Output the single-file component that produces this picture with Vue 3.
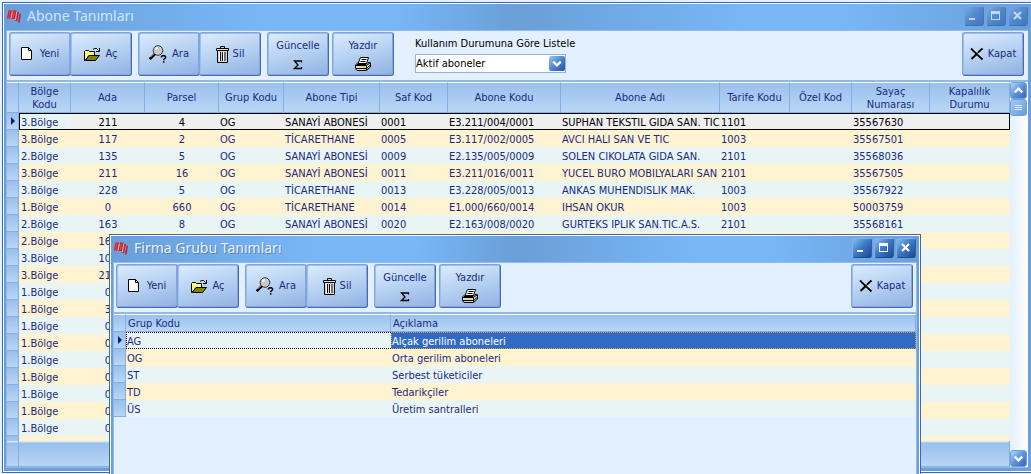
<script setup>
import { ref } from 'vue'

const filter = ref('Aktif aboneler')

const tools = [
  [
    { icon: 'page', label: 'Yeni', w: 12, h: 14 },
    { icon: 'folder', label: 'Aç', w: 17, h: 15 }
  ],
  [
    { icon: 'find', label: 'Ara', w: 18, h: 18 },
    { icon: 'trash', label: 'Sil', w: 13, h: 17 }
  ],
  [{ icon: 'sigma', label: 'Güncelle', w: 10, h: 10, stacked: true }],
  [{ icon: 'printer', label: 'Yazdır', w: 16, h: 14, stacked: true }]
]

const windows = [
  { id: 'main', title: 'Abone Tanımları' },
  { id: 'dialog', title: 'Firma Grubu Tanımları' }
]

const columns = [
  { label: 'Bölge Kodu', width: 52 },
  { label: 'Ada', width: 74, center: true },
  { label: 'Parsel', width: 74, center: true },
  { label: 'Grup Kodu', width: 65 },
  { label: 'Abone Tipi', width: 96 },
  { label: 'Saf Kod', width: 68 },
  { label: 'Abone Kodu', width: 113 },
  { label: 'Abone Adı', width: 159 },
  { label: 'Tarife Kodu', width: 70 },
  { label: 'Özel Kod', width: 62 },
  { label: 'Sayaç Numarası', width: 78 },
  { label: 'Kapalılık Durumu', width: 80 }
]

const S = 'SANAYİ ABONESİ'
const T = 'TİCARETHANE'
const rows = [
  ['3.Bölge', '211', '4', 'OG', S, '0001', 'E3.211/004/0001', 'SUPHAN TEKSTIL GIDA SAN. TIC', '1101', '', '35567630', ''],
  ['3.Bölge', '117', '2', 'OG', T, '0005', 'E3.117/002/0005', 'AVCI HALI SAN VE TIC', '1003', '', '35567501', ''],
  ['2.Bölge', '135', '5', 'OG', S, '0009', 'E2.135/005/0009', 'SOLEN CIKOLATA GIDA SAN.', '2101', '', '35568036', ''],
  ['3.Bölge', '211', '16', 'OG', S, '0011', 'E3.211/016/0011', 'YUCEL BURO MOBILYALARI SAN', '2101', '', '35567505', ''],
  ['3.Bölge', '228', '5', 'OG', T, '0013', 'E3.228/005/0013', 'ANKAS MUHENDISLIK MAK.', '1003', '', '35567922', ''],
  ['1.Bölge', '0', '660', 'OG', T, '0014', 'E1.000/660/0014', 'IHSAN OKUR', '1003', '', '50003759', ''],
  ['2.Bölge', '163', '8', 'OG', S, '0020', 'E2.163/008/0020', 'GURTEKS IPLIK SAN.TIC.A.S.', '2101', '', '35568161', ''],
  ...[
    ['2.Bölge', '163'], ['3.Bölge', '101'], ['3.Bölge', '211'], ['1.Bölge', '0'], ['1.Bölge', '3'],
    ['1.Bölge', '0'], ['1.Bölge', '0'], ['1.Bölge', '0'], ['1.Bölge', '0'], ['1.Bölge', '0'],
    ['1.Bölge', '0'], ['1.Bölge', '0'], ['1.Bölge', '0']
  ].map((r) => [...r, ...Array(10).fill('')])
]

const groups = [
  ['AG', 'Alçak gerilim aboneleri'],
  ['OG', 'Orta gerilim aboneleri'],
  ['ST', 'Serbest tüketiciler'],
  ['TD', 'Tedarikçiler'],
  ['ÜS', 'Üretim santralleri']
]
</script>

<template>
  <div class="desktop">
    <svg class="defs" width="0" height="0" aria-hidden="true">
      <symbol id="logo" viewBox="0 0 14 14">
        <path d="M1.500 1.500H5L3.500 9.500H0zM6 1.500H9.500L8 10H4.500z" fill="#d8141c" />
        <path d="M10.200 3H12L10 12H8.200zM12.500 5 14 4.500 12.500 13.500H11z" fill="#c8141c" />
        <path d="M3 2 1.800 9.500M7.500 2 6.200 9.500" stroke="#f4787c" stroke-width=".6" fill="none" />
        <path d="M5.200 3 4.200 9M9.800 3 8.500 11" stroke="#e8d4e0" stroke-width=".7" fill="none" />
      </symbol>
      <symbol id="page" viewBox="0 0 12 14">
        <path d="M.5.5H7.500L10.500 3.500V12.500H.5z" fill="#fff" stroke="#000" />
        <path d="M7.500.5V3.500H10.500" fill="none" stroke="#000" />
      </symbol>
      <symbol id="folder" viewBox="0 0 17 15">
        <path d="M.5 13.500V4.500L1.500 3.500H4.500L5.500 4.500H10.500V8.500H5L1 13.500z" fill="#ffff7c" stroke="#000" />
        <path d="M1.500 13.500 5 8.500H15.500L11.500 13.500z" fill="#848400" stroke="#000" />
        <path d="M9 2.500 10.500 1.500H12.500L14.500 3.500M15.500 1V4.500H12" fill="none" stroke="#000" />
      </symbol>
      <symbol id="find" viewBox="0 0 18 18">
        <circle cx="9" cy="5.500" r="4.800" fill="#c8c8c8" stroke="#333" />
        <path d="M6.500 5Q7 3 9 2.500" stroke="#fff" stroke-width="1.500" fill="none" />
        <path d="M5.800 9 .8 14" stroke="#000" stroke-width="2.600" />
        <path d="M5 8.500 1.500 12" stroke="#eee" stroke-width=".8" />
        <path d="M12.500 12.500V11.500L13.500 10.800H15.500L16.500 11.800V13L14.700 14.500V15.300M14 17H15.500" stroke="#000" stroke-width="1.500" fill="none" />
      </symbol>
      <symbol id="trash" viewBox="0 0 13 17">
        <path d="M4.500 2V.5H8.500V2" fill="none" stroke="#000" />
        <path d="M.5 2.500H12.500V4.500H.5z" fill="#ddd" stroke="#000" />
        <path d="M1.500 4.500H11.500V16.500H1.500z" fill="#d4d4d4" stroke="#000" />
        <path d="M4.500 6V15M6.500 6V15M9 6V15" stroke="#111" />
        <path d="M3.500 6V15M7.500 6V15" stroke="#fff" />
      </symbol>
      <symbol id="sigma" viewBox="0 0 10 10">
        <path d="M8.500 2.500V1H1.500L5 5 1.500 8.500H8.500V7" fill="none" stroke="#000" stroke-width="1.300" />
      </symbol>
      <symbol id="printer" viewBox="0 0 16 14">
        <path d="M5.500.5H13.500L11.500 6.500H3z" fill="#fff" stroke="#000" />
        <path d="M6.500 2.500H11.500M5.500 4.500H10.500" stroke="#000" />
        <path d="M3 5.500 .5 8V11.500L2 13.500H11.500L15.500 10V6L13 5.500 11 7.500H2" fill="#d8d8d8" stroke="#000" />
        <path d="M.5 8.500H11.500L15.500 5.500M11.500 8.500V13M1 11.500H11.500L15 8.500" fill="none" stroke="#000" />
        <path d="M6 10H10" stroke="#f4e400" stroke-width="1.500" />
      </symbol>
      <symbol id="cross" viewBox="0 0 14 14">
        <path d="M1 1.500 12.500 12.500" stroke="#000" stroke-width="1.800" />
        <path d="M12.500 1.500 1.500 12" stroke="#000" stroke-width="2" />
        <path d="M3 1.500 12 10M12.500 3 8 7.500" stroke="#fff" stroke-width=".6" />
      </symbol>
      <symbol id="down" viewBox="0 0 16 16">
        <path d="M4 6 8 10 12 6" fill="none" stroke="#fff" stroke-width="2.400" />
      </symbol>
      <symbol id="up" viewBox="0 0 16 16">
        <path d="M4 10 8 6 12 10" fill="none" stroke="#fff" stroke-width="2.400" />
      </symbol>
    </svg>

    <section v-for="win in windows" :key="win.id" class="window" :class="win.id" :aria-label="win.title">
      <header class="titlebar">
        <svg class="logo" aria-hidden="true"><use href="#logo" /></svg>
        <h1>{{ win.title }}</h1>
        <div class="captions">
          <button type="button" aria-label="Küçült">
            <svg viewBox="0 0 20 20"><path d="M5 12H11V14H5z" /></svg>
          </button>
          <button type="button" aria-label="Büyüt">
            <svg viewBox="0 0 20 20"><path fill-rule="evenodd" d="M5 5H14V14H5zM6 8V13H13V8z" /></svg>
          </button>
          <button type="button" aria-label="Pencereyi kapat">
            <svg viewBox="0 0 20 20"><path d="M6 6 13 13M13 6 6 13" class="x" /></svg>
          </button>
        </div>
      </header>

      <div class="client">
        <div class="toolbar">
          <div v-for="(group, gi) in tools" :key="gi" class="group">
            <button v-for="t in group" :key="t.label" type="button" class="tool" :class="[{ stacked: t.stacked }, t.icon]">
              <svg :width="t.w" :height="t.h" aria-hidden="true"><use :href="'#' + t.icon" /></svg>
              <span>{{ t.label }}</span>
            </button>
          </div>
          <div v-if="win.id === 'main'" class="filter">
            <label for="usage">Kullanım Durumuna Göre Listele</label>
            <div class="combo">
              <select id="usage" v-model="filter">
                <option>Aktif aboneler</option>
              </select>
              <svg aria-hidden="true"><use href="#down" /></svg>
            </div>
          </div>
          <button type="button" class="tool close">
            <svg width="14" height="14" aria-hidden="true"><use href="#cross" /></svg>
            <span>Kapat</span>
          </button>
        </div>

        <div v-if="win.id === 'main'" class="content">
          <div class="sheet">
            <div class="rows">
              <table class="grid">
                <colgroup>
                  <col class="mark-col" />
                  <col v-for="c in columns" :key="c.label" :style="{ width: c.width + 'px' }" />
                </colgroup>
                <thead>
                  <tr>
                    <th class="mark"></th>
                    <th v-for="c in columns" :key="c.label" scope="col">{{ c.label }}</th>
                  </tr>
                </thead>
                <tbody>
                  <tr v-for="(row, ri) in rows" :key="ri" :class="{ current: ri === 0 }">
                    <td class="mark"></td>
                    <td v-for="(cell, ci) in row" :key="ci" :class="{ center: columns[ci].center }">{{ cell }}</td>
                  </tr>
                </tbody>
              </table>
            </div>
            <div class="summary"><span></span></div>
          </div>
          <div class="scrollbar">
            <button type="button" aria-label="Yukarı"><svg><use href="#up" /></svg></button>
            <div class="thumb"><i></i><i></i><i></i></div>
            <button type="button" class="last" aria-label="Aşağı"><svg><use href="#down" /></svg></button>
          </div>
        </div>

        <div v-else class="content">
          <div class="rows">
            <table class="grid small">
              <colgroup>
                <col class="mark-col" />
                <col class="code-col" />
                <col />
              </colgroup>
              <thead>
                <tr>
                  <th class="mark"></th>
                  <th scope="col">Grup Kodu</th>
                  <th scope="col">Açıklama</th>
                </tr>
              </thead>
              <tbody>
                <tr v-for="(g, i) in groups" :key="g[0]" :class="{ picked: i === 0 }">
                  <td class="mark"></td>
                  <td><span>{{ g[0] }}</span></td>
                  <td><span>{{ g[1] }}</span></td>
                </tr>
              </tbody>
            </table>
          </div>
        </div>
      </div>
    </section>
  </div>
</template>

<style>
body {
  margin: 0;
  background: #e4f0fc;
}
</style>

<style scoped>
.desktop {
  position: relative;
  display: flex;
  height: 100vh;
  box-sizing: border-box;
  padding: 2px 0 1px 2px;
  overflow: hidden;
  font-family: "DejaVu Sans Condensed", "DejaVu Sans", sans-serif;
  font-size: 11px;
  color: #1a2a80;
}
.defs {
  position: absolute;
}
button,
select {
  font: inherit;
  color: inherit;
}
.window {
  flex: 1;
  min-width: 0;
  display: flex;
  flex-direction: column;
  box-sizing: border-box;
  border: 1px solid #3c68b4;
  border-right: 0;
  box-shadow: inset 1px 1px #fff, inset 0 -1px #fff;
  padding: 1px 0 1px 1px;
}
.window.dialog {
  position: absolute;
  z-index: 1;
  top: 234px;
  left: 109px;
  right: 110px;
  bottom: 0;
  border-right: 1px solid #3c68b4;
  border-bottom: 0;
  box-shadow: inset 1px 1px #fff, inset -1px 0 #fff;
  padding: 1px 1px 0 1px;
}
.titlebar {
  display: flex;
  align-items: center;
  height: 26px;
  box-sizing: border-box;
  padding: 0 3px 2px;
  background: linear-gradient(90deg, #6a9fd8, #78b6f6 25%, #78b6f6 38%, #6a9fd8 50%, #78b6f6 72%, #78b6f6 82%, #6a9fd8);
}
.logo {
  width: 14px;
  height: 14px;
}
h1 {
  margin: 0 0 0 6px;
  font: 400 14px/24px "Noto Sans", "Open Sans", sans-serif;
  color: #cfe4fc;
}
.dialog h1 {
  color: #e6f3ff;
  text-shadow: 1px 1px #5c7fb8;
}
.captions {
  display: flex;
  gap: 2px;
  margin-left: auto;
}
.captions button {
  width: 20px;
  height: 20px;
  padding: 0;
  border: 1px solid;
  border-color: #7fb0e6 #2d5ea8 #1e4a94 #7fb0e6;
  border-radius: 3px;
  background: linear-gradient(135deg, #8abdf0, #3f7cc8 45%, #1d4690);
}
.captions svg {
  display: block;
  width: 20px;
  height: 20px;
  margin: -1px;
  fill: #fff;
}
.captions .x {
  fill: none;
  stroke: #fff;
  stroke-width: 2.2;
}
.main .captions button {
  border-color: #6ea4de #4478bc #3c70b8 #6ea4de;
  background: linear-gradient(135deg, #76aae6, #5288cc 50%, #4076bc);
}
.main .captions svg {
  opacity: 0.65;
}
.client {
  flex: 1;
  min-height: 0;
  display: flex;
  flex-direction: column;
  border: solid #6a9fdc;
  border-width: 0 3px 3px 2px;
  box-shadow: inset 1px -1px #92bbec;
  padding: 0 0 1px 1px;
}
.dialog .client {
  border-width: 0 2px 0 2px;
  box-shadow: inset 1px 0 #92bbec, inset -1px 0 #92bbec;
  padding: 0 1px 0 1px;
}
.toolbar {
  display: flex;
  flex: none;
  height: 52px;
  box-sizing: border-box;
  padding: 1px 4px 0 2px;
  background: #e2f0ff;
  border-top: 1px solid #92bbec;
  border-bottom: 2px solid #92b8ea;
}
.dialog .toolbar {
  padding-right: 3px;
}
.group {
  display: flex;
  margin-right: 6px;
}
.group:nth-child(3) {
  margin-right: 3px;
}
.group .tool + .tool {
  margin-left: -1px;
}
.tool {
  display: flex;
  align-items: center;
  justify-content: center;
  gap: 4px;
  width: 62px;
  height: 44px;
  box-sizing: border-box;
  padding: 0;
  border: 1px solid;
  border-color: #7fa4da #4a68b4 #4a68b4 #7fa4da;
  border-radius: 3px;
  background: linear-gradient(165deg, #dcedfd, #b9d3f3 45%, #8fb2e2);
  box-shadow: inset 1px 1px #9dc0ee, inset -1px -1px #88a4dc;
}
.tool.page {
  gap: 7px;
}
.tool.find {
  gap: 5px;
}
.tool.stacked {
  flex-direction: column-reverse;
  gap: 5px;
}
.tool.printer {
  padding-top: 2px;
  gap: 4px;
}
.tool.sigma {
  gap: 7px;
}
.tool.close {
  margin-left: auto;
}
.tool span {
  line-height: 14px;
}
.filter {
  margin: 5px 0 0 15px;
  color: #000;
}
.filter label {
  display: block;
  line-height: 14px;
  white-space: nowrap;
}
.combo {
  position: relative;
  width: 151px;
  margin-top: 3px;
}
.combo select {
  display: block;
  width: 100%;
  height: 19px;
  box-sizing: border-box;
  padding: 0 18px 0 0;
  border: 1px solid #8fb5e8;
  border-radius: 0;
  background: #fff;
  color: #000;
  appearance: none;
}
.combo svg {
  position: absolute;
  top: 2px;
  right: 1px;
  width: 16px;
  height: 15px;
  border-radius: 2px;
  background: linear-gradient(135deg, #9cc6f2, #4f86cc 50%, #2c4ca0);
  pointer-events: none;
}
.content {
  flex: 1;
  min-height: 0;
  display: flex;
}
.sheet {
  flex: 1;
  min-width: 0;
  display: flex;
  flex-direction: column;
}
.rows {
  flex: 1;
  min-width: 0;
  min-height: 0;
  overflow: hidden;
  background: #e2f0ff;
}
.grid {
  width: 100%;
  table-layout: fixed;
  border-collapse: separate;
  border-spacing: 0;
}
.mark-col {
  width: 12px;
}
.code-col {
  width: 265px;
}
th {
  height: 31px;
  box-sizing: border-box;
  padding: 0 5px;
  border-top: 1px solid #f4faff;
  border-right: 1px solid #87aee3;
  border-bottom: 1px solid #87aee3;
  background: linear-gradient(#9ac0ee, #b9d6f5);
  font-weight: 400;
  line-height: 13px;
}
td {
  height: 17px;
  box-sizing: border-box;
  padding: 2px 0 0 1px;
  line-height: 15px;
  white-space: nowrap;
  overflow: hidden;
}
td:nth-child(2) {
  padding-left: 2px;
}
td.center {
  text-align: center;
  padding-left: 0;
}
tbody tr {
  background: #e9f5f5;
}
tbody tr:nth-child(even) {
  background: #fff3d2;
}
td.mark {
  padding: 0;
  border-right: 1px solid #87aee3;
  border-bottom: 1px solid #87aee3;
  background: linear-gradient(#98bfec, #b9d6f5);
}
th.mark {
  padding: 0;
}
.current .mark::before,
.picked .mark::before {
  content: "";
  display: block;
  width: 0;
  margin-left: 4px;
  border: 4px solid transparent;
  border-left-color: #0c2070;
  border-right-width: 0;
}
.current td:not(.mark) {
  box-shadow: inset 0 1px #000, inset 0 -1px #000;
  background: #efefef;
  color: #000;
}
.current td:not(.mark):nth-child(2) {
  box-shadow: inset 1px 1px #000, inset 0 -1px #000;
  background: #e9f5f5;
  color: #1a2a80;
}
.current td:not(.mark):last-child {
  box-shadow: inset 0 1px #000, inset -1px -1px #000;
}
.small th {
  height: 18px;
  padding: 0 2px;
  text-align: left;
}
.small td:not(.mark) {
  padding: 0;
}
.small td span {
  display: block;
  height: 17px;
  box-sizing: border-box;
  padding: 2px 0 0 1px;
}
.small .picked td span {
  border: 1px dotted #000;
  border-right: 0;
  padding: 1px 0 0;
}
.small .picked td:last-child span {
  border: 1px dotted #d89a3c;
  background: #316ac5;
  color: #fff;
}
.summary {
  flex: none;
  height: 26px;
  box-sizing: border-box;
  border: solid #87aee3;
  border-width: 0 1px 1px 0;
  background: linear-gradient(#d4e6fa 0 1px, #98bfec 2px, #b9d6f5);
}
.summary span {
  display: block;
  width: 11px;
  height: 100%;
  border-right: 1px solid #87aee3;
}
.scrollbar {
  flex: none;
  display: flex;
  flex-direction: column;
  width: 18px;
  background: linear-gradient(90deg, #e2f0ff, #fff);
}
.scrollbar button,
.thumb {
  width: 17px;
  height: 17px;
  padding: 0;
  box-sizing: border-box;
  border: 1px solid #6f9fdc;
  border-radius: 3px;
  background: linear-gradient(135deg, #b4d6f8, #5c94d8 50%, #3c62b4);
}
.scrollbar button svg {
  display: block;
  width: 15px;
  height: 15px;
}
.thumb {
  display: flex;
  flex-direction: column;
  justify-content: center;
  align-items: center;
  gap: 1px;
  background: linear-gradient(135deg, #a4caf4, #649cdc);
}
.thumb i {
  width: 7px;
  height: 1px;
  background: #dceafa;
}
.scrollbar .last {
  margin-top: auto;
}
</style>
